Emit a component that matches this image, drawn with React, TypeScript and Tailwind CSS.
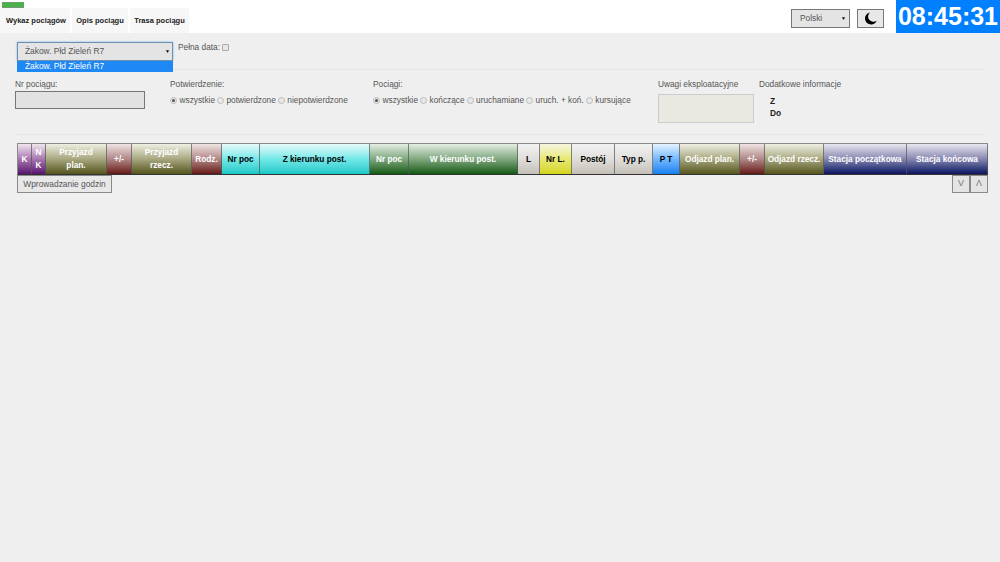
const cols = [
  { w: 14, t: ["K"], c: "from-[#efe6ef] via-[#a878b0] to-[#5a1070] text-white" },
  { w: 14, t: ["N", "K"], c: "from-[#efe6ef] via-[#a878b0] to-[#5a1070] text-white" },
  { w: 61, t: ["Przyjazd", "plan."], c: "from-[#f0f0e4] via-[#a8a880] to-[#55551c] text-white" },
  { w: 25, t: ["+/-"], c: "from-[#f0e4e4] via-[#b08888] to-[#641818] text-white" },
  { w: 60, t: ["Przyjazd", "rzecz."], c: "from-[#f0f0e4] via-[#a8a880] to-[#55551c] text-white" },
  { w: 30, t: ["Rodz."], c: "from-[#f0e4e4] via-[#b08888] to-[#641818] text-white" },
  { w: 38, t: ["Nr poc"], c: "from-[#e4fafa] via-[#70e8e8] to-[#10c8c8] text-black" },
  { w: 110, t: ["Z kierunku post."], c: "from-[#e4fafa] via-[#70e8e8] to-[#10c8c8] text-black" },
  { w: 39, t: ["Nr poc"], c: "from-[#e4eee4] via-[#80a880] to-[#0c5a10] text-white" },
  { w: 109, t: ["W kierunku post."], c: "from-[#e4eee4] via-[#80a880] to-[#0c5a10] text-white" },
  { w: 22, t: ["L"], c: "from-[#f2f2f2] via-[#e0dedb] to-[#c4c0b8] text-black" },
  { w: 32, t: ["Nr L."], c: "from-[#f6f6e0] via-[#e8e870] to-[#d4d410] text-black" },
  { w: 43, t: ["Postój"], c: "from-[#f2f2f2] via-[#e0dedb] to-[#c4c0b8] text-black" },
  { w: 38, t: ["Typ p."], c: "from-[#f2f2f2] via-[#e0dedb] to-[#c4c0b8] text-black" },
  { w: 27, t: ["P T"], c: "from-[#e4f2ff] via-[#70b8ff] to-[#1080f0] text-black" },
  { w: 60, t: ["Odjazd plan."], c: "from-[#f0f0e4] via-[#a8a880] to-[#55551c] text-white" },
  { w: 25, t: ["+/-"], c: "from-[#f0e4e4] via-[#b08888] to-[#641818] text-white" },
  { w: 59, t: ["Odjazd rzecz."], c: "from-[#f0f0e4] via-[#a8a880] to-[#55551c] text-white" },
  { w: 83, t: ["Stacja początkowa"], c: "from-[#e8e8f0] via-[#8888b0] to-[#101060] text-white" },
  { w: 81, t: ["Stacja końcowa"], c: "from-[#e8e8f0] via-[#8888b0] to-[#101060] text-white" },
];

function Radio({ on, label }: { on?: boolean; label: string }) {
  return (
    <span className="flex items-center gap-[2.5px]">
      <span className="flex h-[7px] w-[7px] items-center justify-center rounded-full border border-[#bbb] bg-[#e8e8e8]">
        {on && <span className="h-[3px] w-[3px] rounded-full bg-[#555]" />}
      </span>
      <span>{label}</span>
    </span>
  );
}

function Label({ children }: { children: string }) {
  return <div className="h-[12px] text-[8.3px] leading-[12px]">{children}</div>;
}

export default function App() {
  return (
    <div className="relative flex h-[562px] w-[1000px] flex-col overflow-hidden bg-[#efefef] font-['Liberation_Sans',Arial,sans-serif] text-[#555]">
      <div className="absolute left-[2px] top-[2px] h-[6px] w-[22px] bg-[#6f9a6f] text-center text-[5.5px] font-bold leading-[6px] text-[#16d016]">
        166 FPS
      </div>

      <header className="flex h-[33px] items-stretch bg-white">
        <nav className="flex gap-[2px] pt-[8px] text-[7.5px] font-bold text-[#222]">
          <div className="flex w-[70px] items-center justify-center bg-[#f7f7f7] pl-[2px]">Wykaz pociągów</div>
          <div className="flex w-[56px] items-center justify-center bg-[#f7f7f7]">Opis pociągu</div>
          <div className="flex w-[59px] items-center justify-center bg-[#f7f7f7]">Trasa pociągu</div>
        </nav>
        <div className="ml-auto flex items-start">
          <div className="mt-[9px] flex h-[19px] w-[59px] items-center justify-between border border-[#777] bg-[#e4e4e4] pl-[8px] pr-[3px] text-[8.3px]">
            <span>Polski</span>
            <span className="text-[5px] text-black">▼</span>
          </div>
          <button className="ml-[7px] mt-[9px] flex h-[19px] w-[27px] items-center justify-center border border-[#777] bg-[#e8e8e8]">
            <svg width="13" height="13" viewBox="0 0 12 12">
              <path d="M5.6.4A5.6 5.6 0 1 0 11.7 8 4.8 4.8 0 0 1 5.6.4Z" fill="#000" />
            </svg>
          </button>
          <div className="ml-[12px] flex h-[33px] w-[104px] items-center justify-center bg-[#0080ff] text-[25px] font-bold text-white">
            08:45:31
          </div>
        </div>
      </header>

      <section className="px-[15px]">
        <div className="flex items-start pl-[2px] pt-[9px]">
          <div className="relative h-[19px] w-[156px]">
            <div className="flex h-[19px] items-center justify-between border border-[#6f8fb0] bg-[#e4e4e4] pl-[7px] pr-[2px] text-[8.4px] shadow-[0_0_2px_#7ab0f0]">
              <span>Żakow. Płd Zieleń R7</span>
              <span className="text-[5px] text-black">▼</span>
            </div>
            <div className="absolute left-0 top-[19px] flex h-[11px] w-[156px] items-center bg-[#1e88f5] pl-[8px] text-[8.4px] text-white">
              Żakow. Płd Zieleń R7
            </div>
          </div>
          <div className="ml-[5px] flex items-center gap-[2px] text-[8.3px] leading-[11px]">
            <span>Pełna data:</span>
            <span className="h-[7px] w-[7px] rounded-[1px] border border-[#aaa] bg-[#e8e8e8]" />
          </div>
        </div>

        <div className="ml-[2px] mt-[8px] h-[1px] bg-[#e4e4e4]" />

        <div className="flex pt-[8px] text-[8.3px]">
          <div className="w-[155px]">
            <Label>Nr pociągu:</Label>
            <div className="mt-[1px] h-[18px] w-[130px] border border-[#777] bg-[#e2e2e2]" />
          </div>
          <div className="w-[203px]">
            <Label>Potwierdzenie:</Label>
            <div className="mt-[5px] flex gap-[2px] leading-[11px]">
              <Radio on label="wszystkie" />
              <Radio label="potwierdzone" />
              <Radio label="niepotwierdzone" />
            </div>
          </div>
          <div className="w-[285px]">
            <Label>Pociągi:</Label>
            <div className="mt-[5px] flex gap-[2px] leading-[11px]">
              <Radio on label="wszystkie" />
              <Radio label="kończące" />
              <Radio label="uruchamiane" />
              <Radio label="uruch. + koń." />
              <Radio label="kursujące" />
            </div>
          </div>
          <div className="w-[101px]">
            <Label>Uwagi eksploatacyjne</Label>
            <div className="mt-[4px] h-[29px] w-[96px] border border-[#ccc] bg-[#e9e9e1]" />
          </div>
          <div>
            <Label>Dodatkowe informacje</Label>
            <div className="ml-[11px] mt-[5px] text-[8.3px] font-bold leading-[12px] text-[#222]">
              <div>Z</div>
              <div>Do</div>
            </div>
          </div>
        </div>

        <div className="ml-[2px] mt-[11px] h-[1px] bg-[#e4e4e4]" />
      </section>

      <div className="pl-[17px] pt-[8px]">
        <div className="flex h-[32px] w-[971px] border-y border-l border-y-[#8a8a8a] border-b-[#333] border-l-[#8a8a8a]">
          {cols.map((c, i) => (
            <div
              key={i}
              style={{ width: c.w }}
              className={`flex shrink-0 flex-col items-center justify-center border-r border-r-[#555]/70 bg-linear-to-b text-[8.25px] font-bold leading-[13px] ${c.c}`}
            >
              {c.t.map((l) => (
                <span key={l} className="whitespace-nowrap">{l}</span>
              ))}
            </div>
          ))}
        </div>
        <div className="flex h-[18px] w-[971px] items-start justify-between">
          <button className="h-[18px] w-[95px] border border-[#8a8a8a] bg-[#e8e8e8] text-[8.4px] text-[#555]">
            Wprowadzanie godzin
          </button>
          <div className="flex">
            <button className="h-[18px] w-[18px] border border-[#8a8a8a] bg-[#e4e4e4] text-[9px] text-[#777]">V</button>
            <button className="h-[18px] w-[18px] border border-[#8a8a8a] bg-[#e4e4e4] text-[9px] text-[#777]">Λ</button>
          </div>
        </div>
      </div>
    </div>
  );
}
